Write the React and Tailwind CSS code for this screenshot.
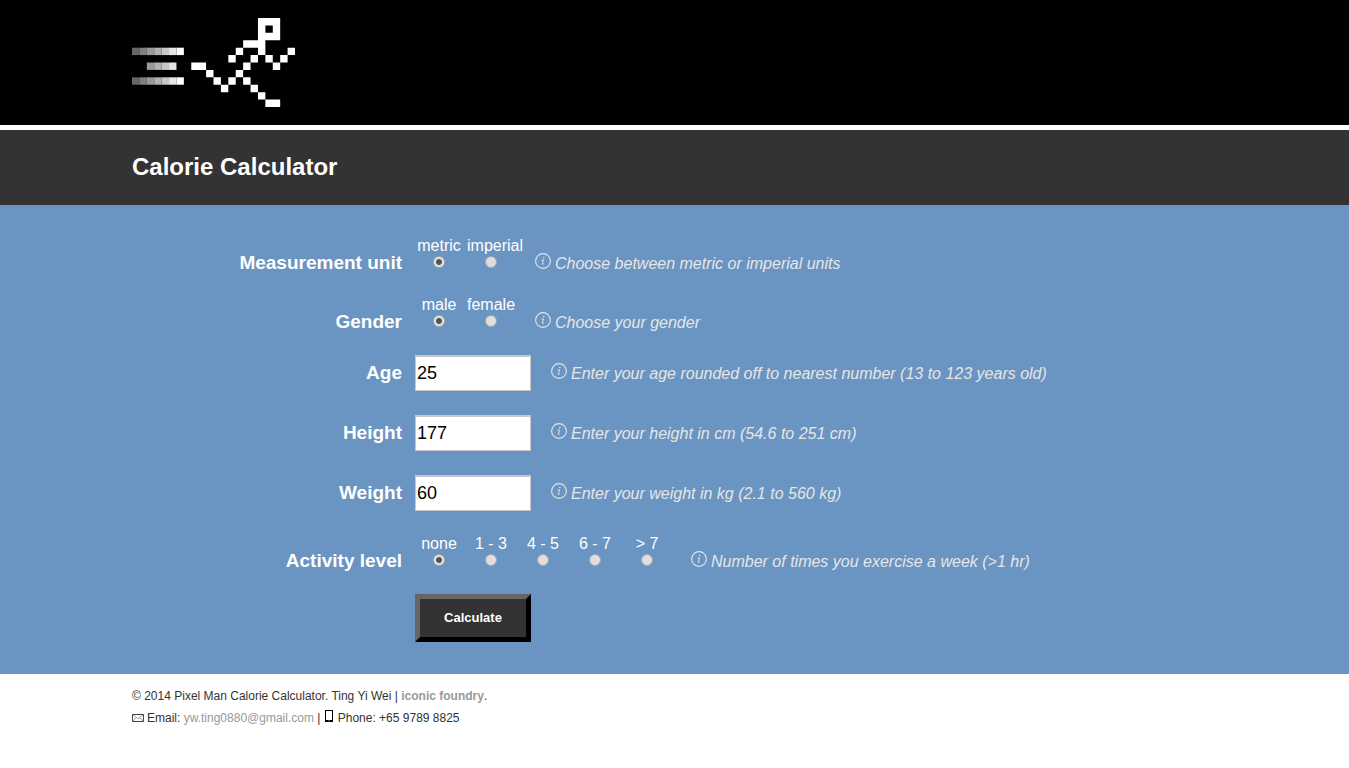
import { useState } from "react";

const TRAILS = [
  { row: 4, start: 0, shades: ["#666666", "#808080", "#999999", "#b0b3b5", "#c8c8c8", "#e6e6e6", "#ffffff"] },
  { row: 6, start: 2, shades: ["#999999", "#b0b3b5", "#c8c8c8", "#e6e6e6"] },
  { row: 8, start: 0, shades: ["#666666", "#808080", "#999999", "#b0b3b5", "#c8c8c8", "#e6e6e6", "#ffffff"] },
];

// [column, row, width, height] on the logo's 22 x 12 grid
const BODY = [
  [17, 0, 3, 1], [17, 1, 1, 1], [19, 1, 1, 1], [17, 2, 3, 1],
  [15, 3, 3, 1], [14, 4, 1, 1], [17, 4, 1, 1], [21, 4, 1, 1],
  [13, 5, 1, 1], [16, 5, 1, 1], [18, 5, 1, 1], [20, 5, 1, 1],
  [8, 6, 2, 1], [15, 6, 1, 1], [19, 6, 1, 1],
  [10, 7, 1, 1], [14, 7, 1, 1],
  [11, 8, 1, 1], [13, 8, 1, 1], [15, 8, 1, 1],
  [12, 9, 1, 1], [16, 9, 1, 1], [17, 10, 1, 1], [18, 11, 2, 1],
];

const BODY_PATH = BODY.map(([x, y, w, h]) => `M${x} ${y}h${w}v${h}h${-w}z`).join("");

function Logo() {
  return (
    <svg className="block h-[89px] w-[163px]" viewBox="0 0 22 12" role="img" aria-label="Pixel Man">
      {TRAILS.map((t) =>
        t.shades.map((c, i) => <rect key={`${t.row}-${i}`} x={t.start + i} y={t.row} width="1" height="1" fill={c} />)
      )}
      <path d={BODY_PATH} fill="#fff" />
    </svg>
  );
}

function InfoIcon() {
  return (
    <svg className="size-4 shrink-0" viewBox="0 0 16 16" fill="none" stroke="currentColor" aria-hidden="true">
      <circle cx="8" cy="8" r="7.4" strokeWidth="1.1" />
      <circle cx="8.8" cy="4.5" r="0.8" fill="currentColor" stroke="none" />
      <path d="M6.6 7.2 8.5 6.7 7.3 11.2q-.1.8 1.4-.4" strokeWidth=".9" />
    </svg>
  );
}

function Hint({ children }) {
  return (
    <p className="ml-5 flex gap-1 text-[16px] leading-[22px] text-[#e6e6e6] italic">
      <InfoIcon />
      <span>{children}</span>
    </p>
  );
}

function RadioRow({ legend, name, options, hint }) {
  const [value, setValue] = useState(options[0]);
  return (
    <div role="radiogroup" aria-labelledby={`${name}-label`} className="flex h-[35px] items-start">
      <div id={`${name}-label`} className="mt-4 mr-[13px] w-[270px] shrink-0 text-right text-[19px] leading-5 font-bold">
        {legend}
      </div>
      <div className="flex gap-1">
        {options.map((o) => (
          <label key={o} className="block w-12 text-center text-[16px] leading-[18px] whitespace-nowrap">
            {o}
            <input
              type="radio"
              name={name}
              value={o}
              checked={value === o}
              onChange={() => setValue(o)}
              className="mx-auto mt-px block size-3 appearance-none rounded-full border border-[#a8a8a8] bg-[#dedede] checked:bg-[radial-gradient(circle,#555_0_2.5px,#e4e4e4_3.5px)]"
            />
          </label>
        ))}
      </div>
      <div className="mt-4">
        <Hint>{hint}</Hint>
      </div>
    </div>
  );
}

function TextRow({ label, name, initial, hint }) {
  return (
    <div className="flex h-9 items-start">
      <label htmlFor={name} className="mt-2 mr-[13px] w-[270px] shrink-0 text-right text-[19px] leading-5 font-bold">
        {label}
      </label>
      <input
        id={name}
        name={name}
        type="text"
        defaultValue={initial}
        className="h-9 w-[116px] border border-t-2 border-[#c8c8c8] bg-white px-px text-[18px] text-black"
      />
      <div className="mt-2">
        <Hint>{hint}</Hint>
      </div>
    </div>
  );
}

function MailIcon() {
  return (
    <svg className="mr-[3px] inline-block h-2 w-3 align-baseline" viewBox="0 0 12 8" fill="none" stroke="#444" aria-hidden="true">
      <path d="M.5.5h11v7H.5z" />
      <path d="M.5.5 6 4.8 11.5.5M.5 7.5l3.6-3.8M11.5 7.5 7.9 3.7" strokeWidth=".5" />
    </svg>
  );
}

function PhoneIcon() {
  return (
    <svg className="mr-[5px] ml-px inline-block h-3 w-2 align-baseline" viewBox="0 0 8 12" aria-hidden="true">
      <path fill="#000" fillRule="evenodd" d="M0 0h8v12H0zM1 1v9h6V1zM3.5 10.5v.8h1v-.8z" />
    </svg>
  );
}

const WRAP = "mx-auto w-full max-w-[1085px]";

export default function App() {
  return (
    <div className="bg-white font-['Liberation_Sans',Arial,sans-serif]">
      <header>
        <div className="border-b-[5px] border-white bg-black py-[18px]">
          <div className={WRAP}>
            <Logo />
          </div>
        </div>
        <div className="bg-[#333] pt-5 pb-[22px]">
          <h1 className={`${WRAP} text-[24px] leading-[33px] font-bold text-white`}>Calorie Calculator</h1>
        </div>
      </header>
      <main className="bg-[#6a94c1] py-8 text-white">
        <form className={`${WRAP} flex flex-col gap-6`} onSubmit={(e) => e.preventDefault()}>
          <RadioRow legend="Measurement unit" name="unit" options={["metric", "imperial"]} hint="Choose between metric or imperial units" />
          <RadioRow legend="Gender" name="gender" options={["male", "female"]} hint="Choose your gender" />
          <TextRow label="Age" name="age" initial="25" hint="Enter your age rounded off to nearest number (13 to 123 years old)" />
          <TextRow label="Height" name="height" initial="177" hint="Enter your height in cm (54.6 to 251 cm)" />
          <TextRow label="Weight" name="weight" initial="60" hint="Enter your weight in kg (2.1 to 560 kg)" />
          <RadioRow
            legend="Activity level"
            name="activity"
            options={["none", "1 - 3", "4 - 5", "6 - 7", "> 7"]}
            hint="Number of times you exercise a week (>1 hr)"
          />
          <button
            type="submit"
            className="ml-[283px] h-12 w-[116px] border-[5px] border-t-[#666] border-r-black border-b-black border-l-[#666] bg-[#333] text-[13px] font-bold text-white"
          >
            Calculate
          </button>
        </form>
      </main>
      <footer className="py-[11px] text-[12px] leading-[22px] text-[#333]">
        <div className={WRAP}>
          <p>
            © 2014 Pixel Man Calorie Calculator. Ting Yi Wei |{" "}
            <a href="#foundry" className="font-bold text-[#999]">iconic foundry</a>.
          </p>
          <p>
            <MailIcon />
            Email: <a href="mailto:yw.ting0880@gmail.com" className="text-[#999]">yw.ting0880@gmail.com</a> | <PhoneIcon />
            Phone: +65 9789 8825
          </p>
        </div>
      </footer>
    </div>
  );
}
